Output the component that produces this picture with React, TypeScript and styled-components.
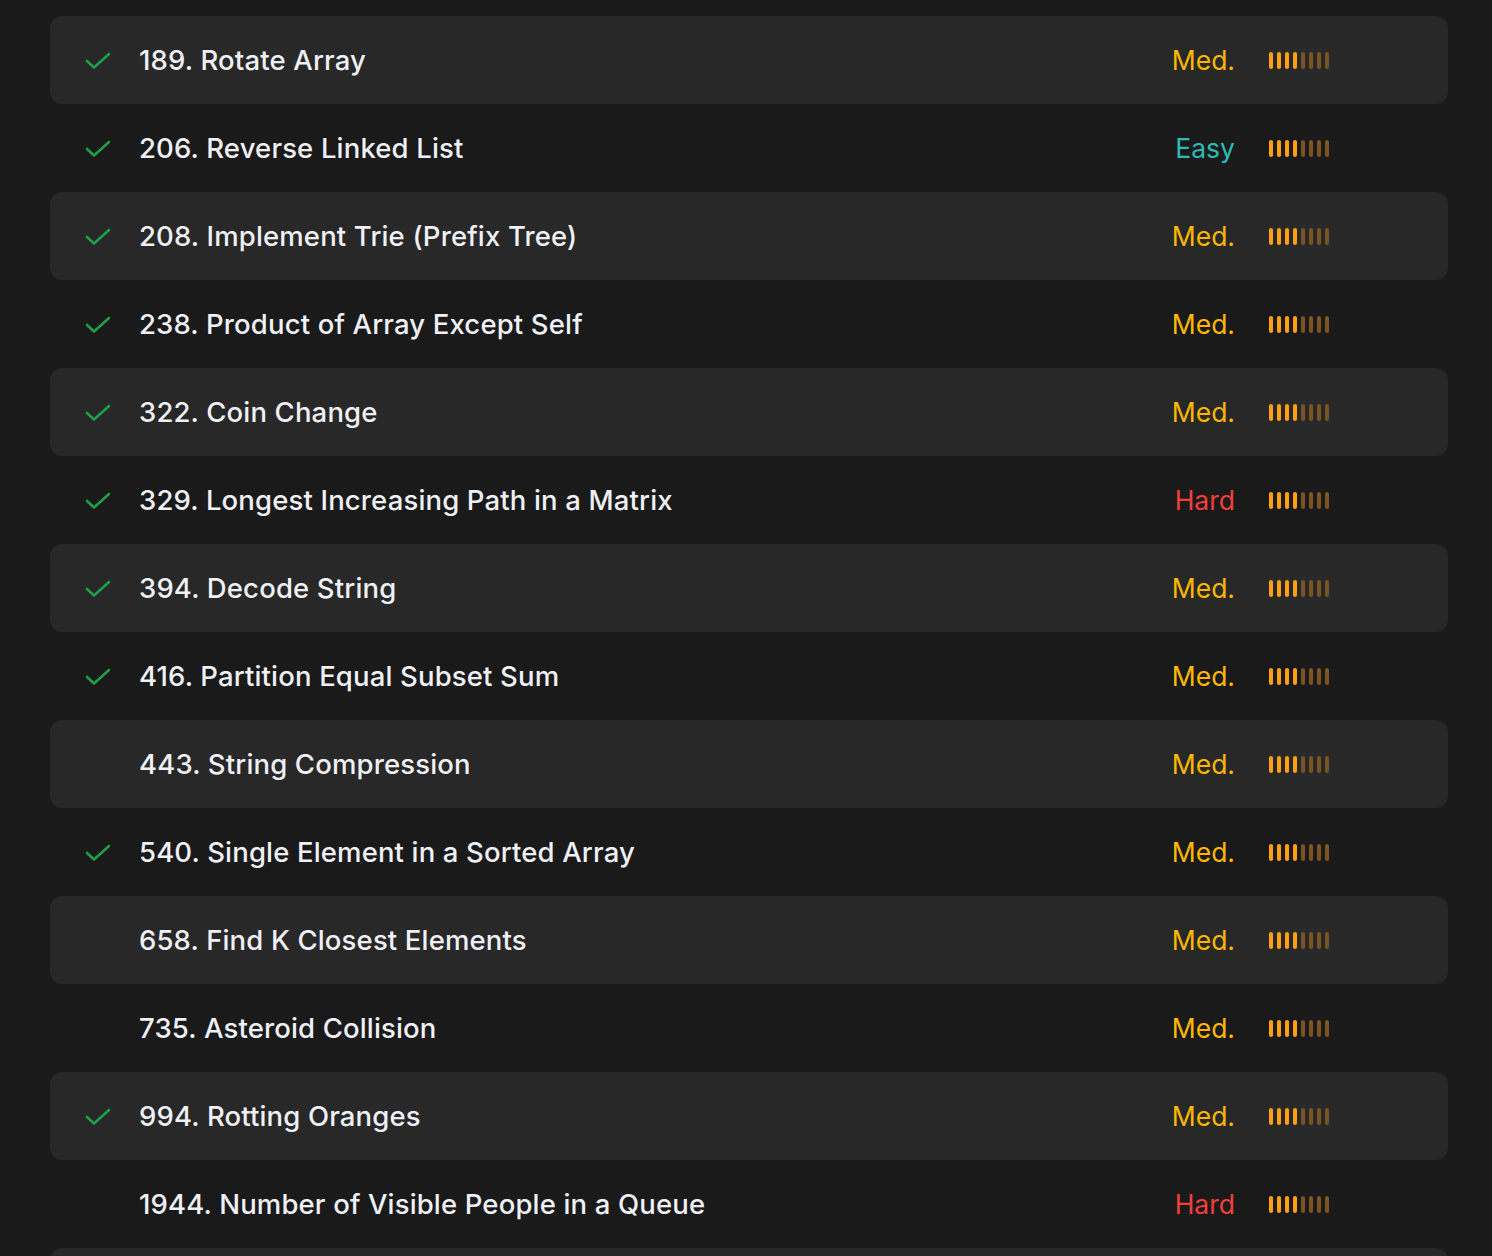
import styled, { createGlobalStyle } from 'styled-components';

type Level = 'Easy' | 'Med.' | 'Hard';

interface Problem {
  title: string;
  level: Level;
  done: boolean;
}

const problems: Problem[] = [
  { title: '189. Rotate Array', level: 'Med.', done: true },
  { title: '206. Reverse Linked List', level: 'Easy', done: true },
  { title: '208. Implement Trie (Prefix Tree)', level: 'Med.', done: true },
  { title: '238. Product of Array Except Self', level: 'Med.', done: true },
  { title: '322. Coin Change', level: 'Med.', done: true },
  { title: '329. Longest Increasing Path in a Matrix', level: 'Hard', done: true },
  { title: '394. Decode String', level: 'Med.', done: true },
  { title: '416. Partition Equal Subset Sum', level: 'Med.', done: true },
  { title: '443. String Compression', level: 'Med.', done: false },
  { title: '540. Single Element in a Sorted Array', level: 'Med.', done: true },
  { title: '658. Find K Closest Elements', level: 'Med.', done: false },
  { title: '735. Asteroid Collision', level: 'Med.', done: false },
  { title: '994. Rotting Oranges', level: 'Med.', done: true },
  { title: '1944. Number of Visible People in a Queue', level: 'Hard', done: false },
];

const levelColors: Record<Level, string> = {
  Easy: '#2cbbb7',
  'Med.': '#ffb800',
  Hard: '#f0403c',
};

const GlobalStyle = createGlobalStyle`
  html, body {
    margin: 0;
    padding: 0;
    background: #1a1a1a;
  }
  body {
    font-family: Inter, "Noto Sans", sans-serif;
    overflow: hidden;
  }
`;

function Check() {
  return (
    <svg width="26" height="18" viewBox="0 0 26 18" fill="none">
      <path d="M2 9 L9 15.5 L24 2" stroke="#1f9e43" strokeWidth="2.6" strokeLinecap="round" strokeLinejoin="round" />
    </svg>
  );
}

function App() {
  return (
    <>
      <GlobalStyle />
      <Page>
        <List>
          {problems.map((p, i) => (
            <Row key={p.title} $striped={i % 2 === 0}>
              <CheckSlot>{p.done && <Check />}</CheckSlot>
              <Title>{p.title}</Title>
              <Level $color={levelColors[p.level]}>{p.level}</Level>
              <Bars>
                {Array.from({ length: 8 }).map((_, b) => (
                  <Bar key={b} $on={b < 4} />
                ))}
              </Bars>
            </Row>
          ))}
          {/* next row, scrolled past the bottom edge */}
          <Row $striped />
        </List>
      </Page>
    </>
  );
}

const Page = styled.div`
  height: 100vh;
  overflow: hidden;
  background: #1a1a1a;
  padding: 16px 44px 0 50px;
  box-sizing: border-box;
`;

const List = styled.div`
  display: flex;
  flex-direction: column;
`;

const Row = styled.div<{ $striped: boolean }>`
  height: 88px;
  flex-shrink: 0;
  display: flex;
  align-items: center;
  padding: 0 119px 0 35px;
  border-radius: 12px;
  background: ${(p) => (p.$striped ? '#282828' : 'transparent')};
`;

const CheckSlot = styled.div`
  width: 26px;
  height: 18px;
  margin-right: 28px;
  display: flex;
  align-items: center;
  margin-top: 2px;
`;

const Title = styled.span`
  flex: 1;
  color: #eff1f6;
  font-size: 27.5px;
  font-weight: 500;
  letter-spacing: 0.15px;
`;

const Level = styled.span<{ $color: string }>`
  color: ${(p) => p.$color};
  font-size: 26.5px;
  font-weight: 400;
  margin-right: 34px;
`;

const Bars = styled.div`
  display: flex;
  gap: 4px;
  align-items: center;
`;

const Bar = styled.span<{ $on: boolean }>`
  width: 4px;
  height: 17px;
  border-radius: 2px;
  background: ${(p) => (p.$on ? '#ffa116' : '#7a5522')};
`;

export default App;
